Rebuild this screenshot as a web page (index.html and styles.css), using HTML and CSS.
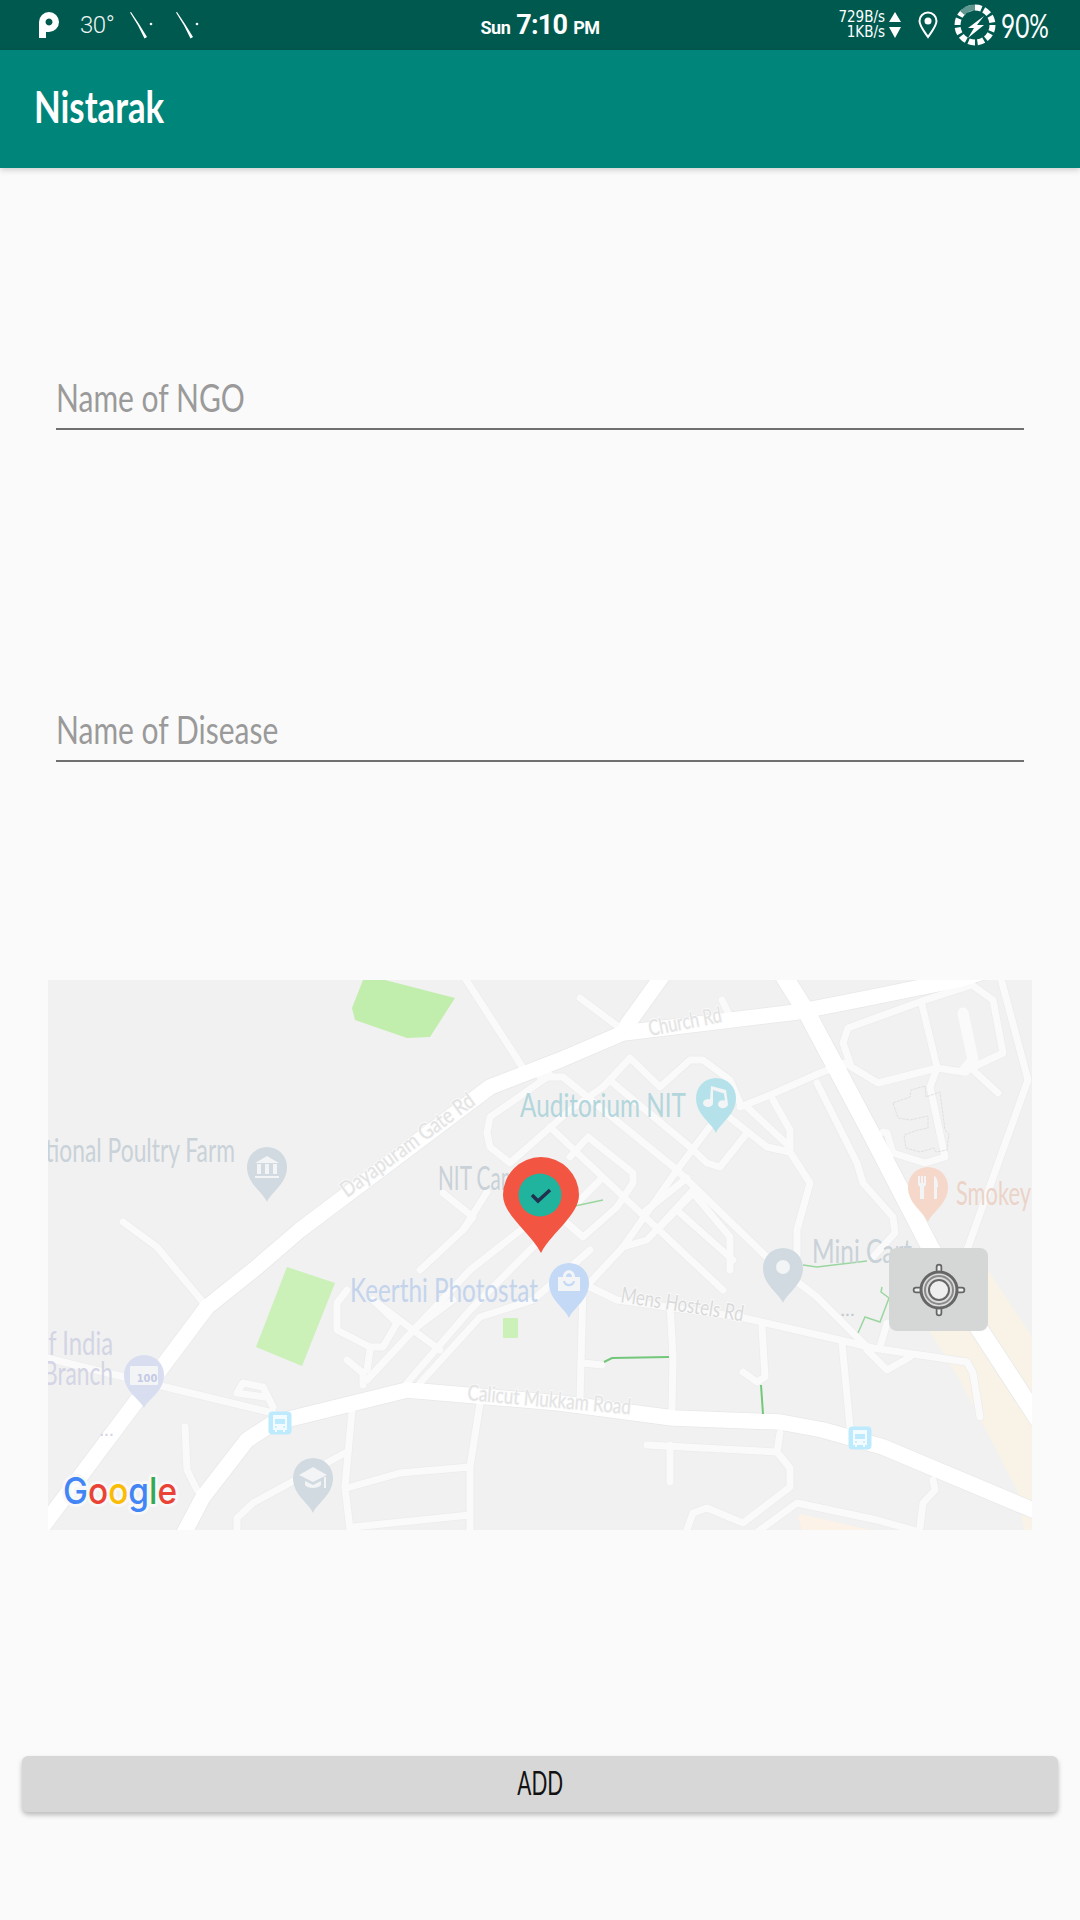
FILE: index.html
```html
<!DOCTYPE html>
<html lang="en">
<head>
<meta charset="utf-8">
<title>Nistarak</title>
<link rel="stylesheet" href="styles.css">
</head>
<body>
<div class="screen">
  <header class="status">
    <div class="status-left">
      <svg class="ic-p" viewBox="0 0 20 26"><path fill-rule="evenodd" d="M0 26V10a10 10 0 1 1 10 10H7v6zM10 6.500a3.500 3.500 0 1 0 .01 0z"/></svg>
      <span class="temp">30°</span>
      <svg class="ic-needle" viewBox="0 0 23 27"><path d="M0 .5l1-.5 8 12 8 13-2.500 1.500-6.500-13z"/><circle cx="21" cy="12" r="1.300"/></svg>
      <svg class="ic-needle second" viewBox="0 0 23 27"><path d="M0 .5l1-.5 8 12 8 13-2.500 1.500-6.500-13z"/><circle cx="21" cy="12" r="1.300"/></svg>
    </div>
    <div class="clock"><span class="clock-sm">Sun</span><span class="clock-lg">7:10</span><span class="clock-sm">PM</span></div>
    <div class="status-right">
      <div class="speed"><span>729B/s</span><span>1KB/s</span></div>
      <svg class="ic-arrows" viewBox="0 0 12 28"><path d="M6 1l6 10H0zM0 16h12L6 27z"/></svg>
      <svg class="ic-loc" viewBox="0 0 20 28"><path fill="none" stroke="#fff" stroke-width="2" d="M10 26C6 20 1.500 15 1.500 10a8.500 8.500 0 0 1 17 0c0 5-4.500 10-8.500 16z"/><circle cx="10" cy="10" r="3.500" fill="#fff"/></svg>
      <svg class="ic-batt" viewBox="0 0 42 42"><circle class="ring" cx="21" cy="21" r="17.500" pathLength="100" stroke-dasharray="6 2.330"/><circle class="ring-dim" cx="21" cy="21" r="17.500" pathLength="100" stroke-dasharray="13 87" stroke-dashoffset="-62"/><path class="bolt" d="M30 12L14 24h6l-6 10 16-13h-7z"/></svg>
      <span class="batt">90%</span>
    </div>
  </header>
  <div class="appbar"><h1 class="title">Nistarak</h1></div>
  <main class="content">
    <div class="field"><span class="hint">Name of NGO</span></div>
    <div class="field field-second"><span class="hint">Name of Disease</span></div>
    <section class="map">
      <svg class="map-svg" viewBox="48 980 984 550">
        <defs>
          <g id="major">
            <path d="M40 1530L207 1307 257 1267 300 1230 490 1087 560 1060 623 1033 797 1012 873 997 957 980 990 970"/>
            <path d="M183 1535L203 1497 247 1440 273 1423 407 1390 560 1403 673 1418 780 1422 823 1430 883 1447 1040 1513"/>
            <path d="M663 975L627 1025"/>
          </g>
          <g id="highway"><path d="M780 970L807 1013 873 1137 930 1247 980 1330 1040 1422"/></g>
          <g id="minor">
            <path d="M40 1356L83 1367 273 1413"/>
            <path d="M580 998L620 1028M722 1000L730 1017M463 975L523 1068"/>
            <path d="M123 1222L157 1247 207 1307"/>
            <path d="M540 1077L563 1077 677 1170 773 1263 817 1297 867 1347"/>
            <path d="M550 1075L490 1117 487 1133 490 1147 510 1163 570 1110 603 1087"/>
            <path d="M550 1127L630 1203 723 1290"/>
            <path d="M603 1087L630 1058 660 1087 690 1060 703 1060 730 1080 740 1103"/>
            <path d="M613 1083L690 1147 707 1163 720 1167 747 1133"/>
            <path d="M717 1117L677 1170 623 1247 583 1290"/>
            <path d="M740 1107L770 1095 820 1073 845 1063"/>
            <path d="M720 1110L767 1147 790 1152 810 1183 797 1230 797 1257"/>
            <path d="M747 1107L790 1147M773 1100L790 1130 790 1150"/>
            <path d="M570 1157L588 1137 633 1173 633 1183 617 1207 583 1237 567 1223"/>
            <path d="M657 1230L693 1193 730 1237 730 1270M623 1247L647 1240 693 1190"/>
            <path d="M643 1213L687 1178M680 1213L733 1260"/>
            <path d="M845 1063L878 1083 937 1068 963 1072 1003 1053 993 1000 972 985 925 1000 848 1028 843 1043 850 1063"/>
            <path d="M922 1005L937 1067M973 1070L998 1093"/>
            <path d="M937 1068L930 1087 945 1157 925 1163 893 1153 887 1133 883 1132"/>
            <path d="M817 1083L857 1163 863 1183 893 1217 895 1233 873 1257"/>
            <path d="M1000 975L1028 1080 967 1250"/>
            <path d="M590 1287L617 1300 740 1317 840 1340 873 1348 967 1362 973 1373 980 1417"/>
            <path d="M583 1287L580 1400M583 1363L602 1365M670 1303L673 1357 672 1410"/>
            <path d="M762 1327L765 1377 757 1382 743 1372M842 1343L850 1427"/>
            <path d="M867 1350L887 1370 910 1357M887 1323L880 1347"/>
            <path d="M647 1445L777 1452 790 1468 790 1487 743 1523 707 1508 693 1513 685 1535"/>
            <path d="M670 1445L670 1482M780 1433L777 1452"/>
            <path d="M753 1535L797 1503 877 1520 920 1532"/>
            <path d="M933 1480L935 1490 923 1503 920 1527"/>
            <path d="M352 1410L345 1487 350 1530M345 1453L253 1503 237 1518 237 1535"/>
            <path d="M347 1488L400 1473 470 1467M480 1403L470 1467 470 1535M353 1527L470 1515"/>
            <path d="M185 1427L187 1470 197 1490"/>
            <path d="M347 1360L363 1373 363 1385M370 1350L367 1370"/>
            <path d="M347 1290L337 1303 337 1330 370 1347 383 1347 397 1323 373 1300"/>
            <path d="M373 1300L413 1330 440 1350M413 1330L453 1300"/>
            <path d="M367 1380L407 1337 470 1270 540 1215"/>
            <path d="M407 1383L470 1310 545 1235 600 1180"/>
            <path d="M420 1383L480 1317 533 1300 590 1250"/>
            <path d="M237 1393L243 1383 263 1387 273 1407M237 1393L265 1397"/>
            <path d="M443 1193L473 1217 463 1230 420 1270"/>
            <path d="M487 1192L463 1230"/>
          </g>
          <g id="roadthick"><path d="M963 1013L973 1060 965 1070"/></g>
        </defs>

        <rect class="map-bg" x="48" y="980" width="984" height="550"/>
        <path class="beige" d="M988 1270L1032 1337V1530H1024L1017 1490 960 1380 930 1332z"/>
        <path class="building-orange" d="M798 1517L800 1514 870 1530H802z"/>
        <path class="park" d="M363 980H385L455 998 430 1037 407 1038 355 1020 352 1008z"/>
        <path class="park-light" d="M287 1267L335 1283 302 1366 256 1347z"/>
        <rect class="park-light" x="503" y="1318" width="15" height="20" rx="1"/>

        <use href="#minor" class="case-minor"/>
        <use href="#major" class="case-major"/>
        <use href="#highway" class="case-high"/>
        <use href="#minor" class="fill-minor"/>
        <use href="#roadthick" class="fill-thick"/>
        <use href="#major" class="fill-major"/>
        <use href="#highway" class="fill-high"/>
        <path class="building" d="M893 1103L910 1097 911 1090 925 1086 926 1097 940 1092 945 1130 949 1134 947 1150 936 1152 934 1148 920 1152 906 1148 904 1135 918 1130 928 1128 928 1116 910 1120 898 1118z"/>

        <path class="trail" d="M604 1362L612 1358 669 1357M761 1385L763 1414"/>
        <path class="trail-soft" d="M858 1333L865 1317 880 1322 889 1298 881 1292 882 1287M575 1206L603 1200M803 1265L817 1267 867 1261"/>

        <text class="lb lb-gray" x="17" y="1162" textLength="218" lengthAdjust="spacingAndGlyphs">National Poultry Farm</text>
        <text class="lb lb-gray" x="438" y="1190" textLength="112" lengthAdjust="spacingAndGlyphs">NIT Campus</text>
        <text class="lb lb-teal" x="520" y="1117" textLength="166" lengthAdjust="spacingAndGlyphs">Auditorium NIT</text>
        <text class="lb lb-orange" x="956" y="1205" textLength="75" lengthAdjust="spacingAndGlyphs">Smokey</text>
        <text class="lb lb-gray" x="812" y="1263" textLength="100" lengthAdjust="spacingAndGlyphs">Mini Cart</text>
        <text class="lb lb-blue" x="350" y="1302" textLength="188" lengthAdjust="spacingAndGlyphs">Keerthi Photostat</text>
        <text class="lb lb-violet" x="35" y="1355" textLength="78" lengthAdjust="spacingAndGlyphs">of India</text>
        <text class="lb lb-violet" x="43" y="1385" textLength="70" lengthAdjust="spacingAndGlyphs">Branch</text>
        <text class="dots dots-violet" x="107" y="1436" text-anchor="middle">...</text>
        <text class="dots dots-gray" x="848" y="1316" text-anchor="middle">...</text>

        <text class="rd" transform="translate(347 1198) rotate(-36)" textLength="160" lengthAdjust="spacingAndGlyphs">Dayapuram Gate Rd</text>
        <text class="rd" transform="translate(650 1036) rotate(-11)" textLength="74" lengthAdjust="spacingAndGlyphs">Church Rd</text>
        <text class="rd rd-dark" transform="translate(620 1302) rotate(9)" textLength="124" lengthAdjust="spacingAndGlyphs">Mens Hostels Rd</text>
        <text class="rd" transform="translate(467 1400) rotate(5)" textLength="164" lengthAdjust="spacingAndGlyphs">Calicut Mukkam Road</text>

        <g class="poi poi-gray" transform="translate(267 1167)">
          <path d="M0 35C-4 25-20 17-20 0a20 20 0 0 1 40 0C20 17 4 25 0 35z"/>
          <path class="poi-glyph" d="M-12-4L0-11 12-4zM-10-3h4v10h-4zM-2-3h4v10h-4zM6-3h4v10H6zM-12 9h24v2h-24z"/>
        </g>
        <g class="poi poi-teal" transform="translate(716 1098)">
          <path d="M0 35C-4 25-20 17-20 0a20 20 0 0 1 40 0C20 17 4 25 0 35z"/>
          <path class="poi-glyph" d="M-5-12L10-8 12 6a5 4 0 1 1-3-3.500l-1-7L-3-8-3 5a5 4 0 1 1-3-3.600z"/>
        </g>
        <g class="poi poi-orange" transform="translate(928 1187)">
          <path d="M0 35C-4 25-20 17-20 0a20 20 0 0 1 40 0C20 17 4 25 0 35z"/>
          <path class="poi-glyph" d="M-10-11h2v7h1v-7h2v7h1v-7h2v9l-2 2V12h-4V0l-2-2zM6-11c3 1 4 5 4 11H9V12H6z"/>
        </g>
        <g class="poi poi-gray" transform="translate(783 1268)">
          <path d="M0 35C-4 25-20 17-20 0a20 20 0 0 1 40 0C20 17 4 25 0 35z"/>
          <circle class="poi-glyph" cy="-1" r="7"/>
        </g>
        <g class="poi poi-blue" transform="translate(569 1283)">
          <path d="M0 35C-4 25-20 17-20 0a20 20 0 0 1 40 0C20 17 4 25 0 35z"/>
          <path class="poi-glyph" fill-rule="evenodd" d="M-11-6h5c0-9 12-9 12 0h5v14h-22zM-3-6h6c0-5-6-5-6 0zM-6-2c1 7 11 7 12 0h-2c-1 4-7 4-8 0z"/>
        </g>
        <g class="poi poi-violet" transform="translate(144 1375)">
          <path d="M0 33C-4 24-20 17-20 0a20 20 0 0 1 40 0C20 17 4 24 0 33z"/>
          <rect class="poi-glyph" x="-14" y="-9" width="28" height="19" rx="1"/>
          <text class="poi-num" x="3" y="7" text-anchor="middle">100</text>
        </g>
        <g class="poi poi-gray" transform="translate(313 1478)">
          <path d="M0 35C-4 25-20 17-20 0a20 20 0 0 1 40 0C20 17 4 25 0 35z"/>
          <path class="poi-glyph" d="M0-11L14-3 0 4-14-3zM-8 3L0 7 8 3v4c-3 4-13 4-16 0zM11-1h2v11h-2z"/>
        </g>

        <g transform="translate(280 1423)">
          <rect class="bus-bg" x="-11.500" y="-11.500" width="23" height="23" rx="4"/>
          <path class="bus-glyph" fill-rule="evenodd" d="M-7-8H7V7H5v2H3V7H-3v2H-5V7H-7zM-5-4V1H5V-4zM-5 4a1 1 0 1 0 2 0 1 1 0 1 0-2 0zM3 4a1 1 0 1 0 2 0 1 1 0 1 0-2 0z"/>
        </g>
        <g transform="translate(860 1438)">
          <rect class="bus-bg" x="-11.500" y="-11.500" width="23" height="23" rx="4"/>
          <path class="bus-glyph" fill-rule="evenodd" d="M-7-8H7V7H5v2H3V7H-3v2H-5V7H-7zM-5-4V1H5V-4zM-5 4a1 1 0 1 0 2 0 1 1 0 1 0-2 0zM3 4a1 1 0 1 0 2 0 1 1 0 1 0-2 0z"/>
        </g>

        <text class="google" x="63" y="1504" textLength="114" lengthAdjust="spacingAndGlyphs"><tspan class="g-blue">G</tspan><tspan class="g-red">o</tspan><tspan class="g-yellow">o</tspan><tspan class="g-blue">g</tspan><tspan class="g-green">l</tspan><tspan class="g-red">e</tspan></text>

        <path class="pin-red" d="M541 1253C530 1232 503 1215 503 1195a38 38 0 0 1 76 0C579 1215 552 1232 541 1253z"/>
        <circle class="pin-teal" cx="540" cy="1195" r="21.500"/>
        <path class="pin-check" d="M532 1195l6 6 12-11"/>
      </svg>
      <button class="recenter" type="button" aria-label="Recenter">
        <svg class="recenter-ic" viewBox="0 0 56 56">
          <path class="tick-out" d="M28 5v10M28 41v10M5 28h10M41 28h10"/>
          <path class="tick-in" d="M28 5v10M28 41v10M5 28h10M41 28h10"/>
          <circle class="rc-outer" cx="28" cy="28" r="18"/>
          <circle class="rc-mid" cx="28" cy="28" r="14"/>
          <circle class="rc-core" cx="28" cy="28" r="10"/>
        </svg>
      </button>
    </section>
    <button class="add" type="button"><span class="add-label">ADD</span></button>
  </main>
</div>
</body>
</html>
```
FILE: styles.css
```css
* { box-sizing: border-box; }
html, body { margin: 0; padding: 0; }
body { width: 1080px; height: 1920px; background: #fafafa; overflow: hidden; font-family: Lato, "DejaVu Sans Condensed", sans-serif; }
.screen { display: flex; flex-direction: column; height: 1920px; }

.status { height: 50px; background: #00594f; color: #fff; display: grid; grid-template-columns: 1fr auto 1fr; align-items: center; }
.status-left { display: flex; align-items: center; padding-left: 39px; }
.status-left svg { fill: #fff; }
.ic-p { width: 20px; height: 26px; }
.temp { margin-left: 21px; font: 300 24px Roboto, sans-serif; width: 50px; color: #eef5f4; letter-spacing: -.5px; }
.ic-needle { width: 23px; height: 27px; }
.ic-needle.second { margin-left: 23px; }
.clock { display: flex; align-items: baseline; gap: 6px; font-family: Roboto, sans-serif; font-weight: 700; }
.clock-sm { font-size: 18px; letter-spacing: -.5px; }
.clock-lg { font-size: 27px; letter-spacing: -.8px; }
.status-right { display: flex; align-items: center; justify-content: flex-end; padding-right: 33px; }
.speed { display: flex; flex-direction: column; align-items: flex-end; font-family: "DejaVu Sans Condensed", sans-serif; font-size: 15px; line-height: 15px; width: 48px; }
.ic-arrows { width: 12px; height: 28px; margin-left: 4px; fill: #fff; }
.ic-loc { width: 20px; height: 28px; margin-left: 17px; }
.ic-batt { width: 42px; height: 42px; margin-left: 16px; }
.ring, .ring-dim { fill: none; stroke-width: 6; }
.ring { stroke: #fff; }
.ring-dim { stroke: #5f9890; }
.bolt { fill: #fff; }
.batt { font-size: 33px; margin-left: 5px; width: 46px; white-space: nowrap; display: inline-block; transform: scaleX(.74); transform-origin: left center; }

.appbar { height: 118px; background: #00857a; display: flex; align-items: center; padding-left: 34px; box-shadow: 0 2px 6px rgba(0,0,0,.18); position: relative; }
.title { margin: 0; color: #fff; font-size: 44px; font-weight: 700; padding-bottom: 7px; transform: scaleX(.79); transform-origin: left center; }

.content { flex: 1; display: flex; flex-direction: column; }
.field { margin: 198px 56px 0; height: 64px; border-bottom: 2px solid #707070; display: flex; align-items: flex-end; padding-bottom: 8px; }
.field-second { margin-top: 268px; }
.hint { font-size: 38px; color: #9a9a9a; line-height: 46px; white-space: nowrap; transform: scaleX(.79); transform-origin: left center; }

.map { position: relative; margin: 218px 48px 0; height: 550px; }
.map-svg { display: block; width: 984px; height: 550px; }
.map-bg { fill: #f1f1f1; }
.beige { fill: #f9f3e7; }
.building-orange { fill: #fdf2e8; }
.park { fill: #c1eeac; }
.park-light { fill: #cbf0b8; }
.case-major, .case-minor, .case-high, .fill-major, .fill-minor, .fill-high, .fill-thick { fill: none; stroke-linejoin: round; stroke-linecap: round; }
.case-major { stroke: #e8e8e8; stroke-width: 17; }
.fill-major { stroke: #fff; stroke-width: 15.500; }
.case-high { stroke: #e8e8e8; stroke-width: 19; }
.fill-high { stroke: #fff; stroke-width: 17.500; }
.case-minor { stroke: #ececec; stroke-width: 8.500; }
.fill-minor { stroke: #fafafa; stroke-width: 7; }
.fill-thick { stroke: #fafafa; stroke-width: 11; }
.building { fill: none; stroke: #e0e0e0; stroke-width: 1; stroke-dasharray: 3 1; }
.trail { fill: none; stroke: #72c77b; stroke-width: 2; }
.trail-soft { fill: none; stroke: #9ad6a0; stroke-width: 1.500; }

.lb { font-size: 32px; }
.lb-gray { fill: #c9d2d8; }
.lb-teal { fill: #b2d6dc; }
.lb-orange { fill: #ecd3c8; }
.lb-blue { fill: #c3d4ec; }
.lb-violet { fill: #d3d5e4; }
.dots { font: 700 14px "Liberation Sans", sans-serif; letter-spacing: 1px; }
.dots-violet { fill: #d3d5e4; }
.dots-gray { fill: #c4c8cc; }
.rd { font-size: 22px; fill: #e3e3e3; stroke: #fafafa; stroke-width: 2px; paint-order: stroke; }
.rd-dark { fill: #d9d9d9; }

.poi-gray > path:first-child { fill: #d0dae0; }
.poi-teal > path:first-child { fill: #b5e2ea; }
.poi-orange > path:first-child { fill: #f5d8ca; }
.poi-blue > path:first-child { fill: #c3d9f5; }
.poi-violet > path:first-child { fill: #d9ddf0; }
.poi-glyph { fill: #f2f4f5; }
.poi-num { font: 700 11px "DejaVu Sans Condensed", sans-serif; fill: #c4cae6; }
.bus-bg { fill: #bdebfd; }
.bus-glyph { fill: #f2fbff; }

.google { font: 500 37px Inter, sans-serif; stroke: #f8f8f8; stroke-width: 6px; stroke-linejoin: round; paint-order: stroke; }
.g-blue { fill: #4285f4; }
.g-red { fill: #ea4335; }
.g-yellow { fill: #fbbc05; }
.g-green { fill: #34a853; }

.pin-red { fill: #f25542; }
.pin-teal { fill: #20b49e; }
.pin-check { fill: none; stroke: #22304f; stroke-width: 3.500; }

.recenter { position: absolute; left: 841px; top: 268px; width: 99px; height: 83px; border: 0; padding: 0; background: #d5d7d6; border-radius: 8px; display: flex; align-items: center; justify-content: center; }
.recenter-ic { width: 56px; height: 56px; fill: none; overflow: visible; }
.tick-out { stroke: #666; stroke-width: 6.500; stroke-linecap: round; }
.tick-in { stroke: #eee; stroke-width: 3; stroke-linecap: round; }
.rc-outer { stroke: #666; stroke-width: 3; fill: #dcdcdc; }
.rc-mid { stroke: #8a8a8a; stroke-width: 2; }
.rc-core { stroke: #666; stroke-width: 2; fill: #eee; }

.add { margin: 226px 22px 0; height: 56px; border: 0; border-radius: 6px; background: #d6d7d6; color: #111; font-family: inherit; font-size: 32px; padding: 0 0 4px; box-shadow: 0 3px 5px rgba(0,0,0,.25); }
.add-label { display: inline-block; transform: scaleX(.65); }
```
